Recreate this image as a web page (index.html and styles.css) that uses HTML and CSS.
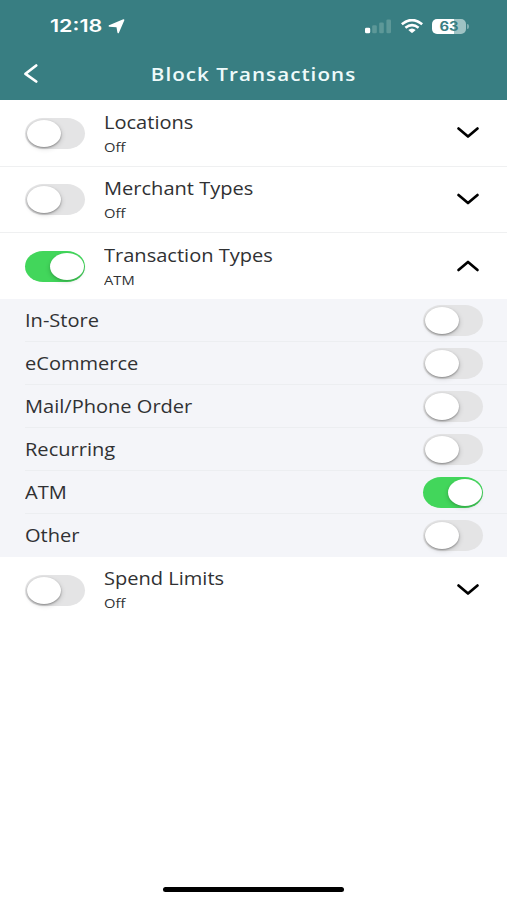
FILE: index.html
```html
<!DOCTYPE html>
<html lang="en">
<head>
<meta charset="utf-8">
<title>Block Transactions</title>
<link rel="stylesheet" href="styles.css">
</head>
<body>
<div class="screen">
  <header class="header">
    <div class="status">
      <span class="time">12:18</span>
      <svg class="location" width="17" height="15" viewBox="0 0 17 15"><path d="M15.6 1 10.2 13.4 9.3 8.1Q9.2 7.5 8.5 7.4L1.4 6.9Z" fill="#fff" stroke="#fff" stroke-width="1.6" stroke-linejoin="round"/></svg>
      <svg class="signal" width="27" height="15" viewBox="0 0 27 15"><rect x="0" y="8.7" width="5.2" height="5.6" rx="1.4" fill="#fff"/><g fill="#5d9898"><rect x="7.2" y="6.2" width="4.6" height="8.1" rx="1.3"/><rect x="14.2" y="3.4" width="4.6" height="10.9" rx="1.3"/><rect x="21.4" y=".4" width="4.6" height="13.9" rx="1.3"/></g></svg>
      <svg class="wifi" width="22" height="15" viewBox="0 0 22 15"><g fill="none" stroke="#fff" stroke-width="2.6"><path d="M.8 5.2Q11-3.1 21.2 5.2"/><path d="M4.4 8.8Q11 3.5 17.6 8.8"/></g><path d="M7.3 11Q11 7.8 14.7 11L11.8 13.6Q11 14.2 10.2 13.6Z" fill="#fff"/></svg>
      <div class="battery"><span class="level">63</span></div>
      <span class="battery-tip"></span>
    </div>
    <div class="nav">
      <svg class="back" width="16" height="20" viewBox="0 0 16 20"><path d="M13.2 1.5 2.5 9.8 13.2 17.5" fill="none" stroke="#fff" stroke-width="2.7" stroke-linecap="round" stroke-linejoin="round"/></svg>
      <h1 class="title">Block Transactions</h1>
    </div>
  </header>
  <main>
    <section class="row">
      <span class="toggle"></span>
      <div class="text"><span class="name">Locations</span><span class="state">Off</span></div>
      <svg class="chevron" width="24" height="14" viewBox="0 0 24 14"><path d="M2.5 2.5 12 10.5 21.5 2.5"/></svg>
    </section>
    <section class="row">
      <span class="toggle"></span>
      <div class="text"><span class="name">Merchant Types</span><span class="state">Off</span></div>
      <svg class="chevron" width="24" height="14" viewBox="0 0 24 14"><path d="M2.5 2 12 10 21.5 2"/></svg>
    </section>
    <section class="row open">
      <span class="toggle on"></span>
      <div class="text"><span class="name">Transaction Types</span><span class="state">ATM</span></div>
      <svg class="chevron" width="24" height="14" viewBox="0 0 24 14"><path d="M2.5 11 12 3 21.5 11"/></svg>
    </section>
    <div class="options">
      <div class="option"><span class="name">In-Store</span><span class="toggle"></span></div>
      <div class="option"><span class="name">eCommerce</span><span class="toggle"></span></div>
      <div class="option"><span class="name">Mail/Phone Order</span><span class="toggle"></span></div>
      <div class="option"><span class="name">Recurring</span><span class="toggle"></span></div>
      <div class="option"><span class="name">ATM</span><span class="toggle on"></span></div>
      <div class="option"><span class="name">Other</span><span class="toggle"></span></div>
    </div>
    <section class="row last">
      <span class="toggle"></span>
      <div class="text"><span class="name">Spend Limits</span><span class="state">Off</span></div>
      <svg class="chevron" width="24" height="14" viewBox="0 0 24 14"><path d="M2.5 2.5 12 10.5 21.5 2.5"/></svg>
    </section>
  </main>
  <div class="home"></div>
</div>
</body>
</html>
```

FILE: styles.css
```css
* { box-sizing: border-box; }
body { margin: 0; background: #fff; font-family: "Open Sans", "Noto Sans", sans-serif; color: #303133; }
.screen { width: 507px; height: 900px; display: flex; flex-direction: column; overflow: hidden; }
.header { height: 100px; flex: none; background: #387e82; color: #fff; }
.status { height: 50px; padding: 2px 38px 0 50px; display: flex; align-items: center; }
.time { width: 58px; font: 600 17.5px/20px Inter, sans-serif; transform: scaleX(1.23); transform-origin: left; }
.signal { margin-left: auto; }
.wifi { margin-left: 9px; }
.battery { width: 34px; height: 15px; margin-left: 9px; border-radius: 5px; background: linear-gradient(90deg, #fff 65%, #9fc3c4 65%); color: #387e82; display: flex; align-items: center; justify-content: center; }
.level { font: 700 12.5px/15px Inter, sans-serif; transform: scaleX(1.18); }
.battery-tip { width: 2px; height: 5px; margin-left: 1px; border-radius: 0 2px 2px 0; background: #80afb1; }
.nav { height: 48px; display: grid; grid-template-columns: 60px 1fr 60px; align-items: center; }
.back { margin-left: 23px; }
.title { margin: 0; text-align: center; font-size: 17.6px; line-height: 24px; font-weight: 600; letter-spacing: .9px; color: #eefafa; transform: scaleX(1.17); white-space: nowrap; }
.row { height: 66.5px; padding: 1px 27px 0 25px; display: flex; align-items: center; border-bottom: 1.5px solid #eff0f1; }
.row.open { height: 66px; border-bottom-color: transparent; }
.row.last { padding-top: 0; border: 0; height: 66px; }
.text { flex: 1; margin-left: 19px; padding-top: 2px; display: flex; flex-direction: column; align-items: flex-start; }
.last .text { padding-top: 0; }
.name { font-size: 17.3px; line-height: 26px; white-space: nowrap; transform: scaleX(1.16); transform-origin: left; }
.state { font-size: 12.6px; line-height: 23px; transform: scaleX(1.17); transform-origin: left; }
.chevron { fill: none; stroke: #000; stroke-width: 2.7; stroke-linecap: round; stroke-linejoin: round; }
.toggle { flex: none; width: 60px; height: 31px; padding: 2px 1.5px; border-radius: 18px / 15.5px; background: #e4e4e5; display: flex; }
.toggle::after { content: ""; width: 34px; height: 27px; border-radius: 50%; background: #fff; box-shadow: 0 1px 2px rgba(0, 0, 0, .35), 1px 2px 5px rgba(0, 0, 0, .13); }
.toggle.on { background: #42d65b; justify-content: flex-end; }
.toggle.on::after { box-shadow: 0 1px 2px rgba(0, 0, 0, .15), -1px 2px 4px rgba(0, 0, 0, .12); }
.options { background: #f4f5f9; padding-left: 25px; }
.option { height: 43px; padding-right: 24px; display: flex; align-items: center; justify-content: space-between; border-bottom: 1px solid #eceef1; }
.option .name { padding-top: 2px; }
.option:last-child { border-color: transparent; }
.home { width: 181px; height: 5px; margin: auto auto 8px 163px; border-radius: 3px; background: #000; }
```
